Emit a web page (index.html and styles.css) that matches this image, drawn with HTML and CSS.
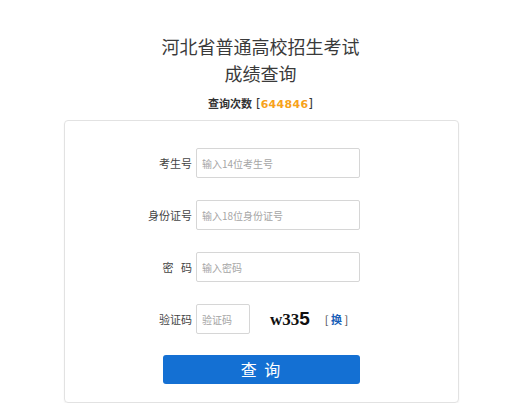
FILE: index.html
```html
<!DOCTYPE html>
<html lang="zh-CN">
<head>
<meta charset="utf-8">
<title>成绩查询</title>
<link rel="stylesheet" href="styles.css">
</head>
<body>
<div class="header">
  <h1 class="title">河北省普通高校招生考试</h1>
  <h2 class="title">成绩查询</h2>
  <p class="count">查询次数<span class="br open">[</span><span class="num">644846</span><span class="br">]</span></p>
</div>
<div class="card">
  <div class="row">
    <label class="label">考生号</label>
    <input class="field" type="text" placeholder="输入14位考生号">
  </div>
  <div class="row">
    <label class="label">身份证号</label>
    <input class="field" type="text" placeholder="输入18位身份证号">
  </div>
  <div class="row">
    <label class="label">密&nbsp;&nbsp;&nbsp;码</label>
    <input class="field" type="password" placeholder="输入密码">
  </div>
  <div class="row">
    <label class="label">验证码</label>
    <input class="field small" type="text" placeholder="验证码">
    <span class="captcha">w33<b>5</b></span>
    <span class="swap">[ <a>换</a> ]</span>
  </div>
  <div class="actions">
    <button class="btn" type="button">查 询</button>
  </div>
</div>
</body>
</html>
```
FILE: styles.css
```css
* { box-sizing: border-box; }
body {
  margin: 0;
  background: #fff;
  font-family: "Noto Sans CJK SC", "Noto Sans", sans-serif;
  color: #333;
}
.header {
  padding-top: 33px;
  text-align: center;
}
.title {
  margin: 0;
  font-size: 18px;
  line-height: 27px;
  font-weight: normal;
  color: #3a3a3a;
}
.count {
  margin: 8px 0 0;
  font-size: 11px;
  line-height: 16px;
  font-weight: bold;
  color: #333;
}
.count .br {
  font-family: "DejaVu Sans", sans-serif;
  font-weight: normal;
  font-size: 12px;
}
.count .br.open { margin-left: 4px; }
.count .num {
  font-family: "DejaVu Sans", sans-serif;
  color: #f7a21b;
  font-size: 11px;
  letter-spacing: 0.3px;
}
.card {
  width: 395px;
  margin: 7px auto 0;
  position: relative;
  left: 1px;
  border: 1px solid #e2e2e2;
  border-radius: 4px;
  box-shadow: 0 1px 2px rgba(0,0,0,0.06);
  padding: 27px 0 18px;
}
.row {
  display: flex;
  align-items: center;
  height: 30px;
  margin-bottom: 22px;
  padding-left: 57px;
}
.label {
  width: 70px;
  text-align: right;
  font-size: 11px;
  color: #444;
  margin-right: 4px;
}
.field {
  width: 164px;
  height: 30px;
  border: 1px solid #d6d6d6;
  border-radius: 2px;
  padding: 0 5px;
  font-size: 10px;
  font-family: "Noto Sans CJK SC", sans-serif;
  color: #333;
  outline: none;
}
.field::placeholder { color: #a5a5a5; }
.field.small { width: 54px; }
.captcha {
  margin-left: 20px;
  font-family: "Liberation Serif", serif;
  font-weight: bold;
  font-size: 17px;
  color: #111;
}
.captcha b { font-family: "Liberation Sans", sans-serif; font-size: 19px; }
.swap {
  margin-left: 15px;
  font-size: 11px;
  color: #444;
}
.swap a { color: #1a5fb8; font-weight: bold; }
.actions {
  padding-left: 98px;
  margin-top: -1px;
}
.btn {
  width: 197px;
  height: 29px;
  border: 0;
  border-radius: 3px;
  background: #1470d3;
  color: #fff;
  font-family: "Noto Sans CJK SC", sans-serif;
  font-size: 16px;
  letter-spacing: 2px;
  line-height: 29px;
  padding: 0;
}
```
